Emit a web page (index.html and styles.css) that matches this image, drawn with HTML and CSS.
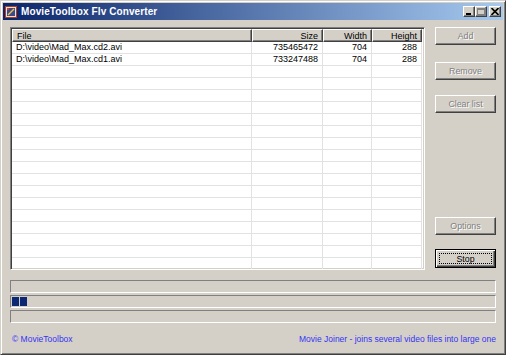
FILE: index.html
```html
<!DOCTYPE html>
<html lang="en">
<head>
  <meta charset="UTF-8">
  <title>MovieToolbox Flv Converter</title>
  <link rel="stylesheet" href="styles.css">
</head>
<body>

  <div class="window">
    <div class="titlebar">
      <svg class="app-icon" width="12" height="12" viewBox="0 0 12 12">
        <rect x="0.5" y="0.5" width="11" height="11" fill="#e8e4dc" stroke="#b83a1a"/>
        <rect x="2" y="2" width="8" height="8" fill="#3a4a8a"/>
        <path d="M3 9 L9 3" stroke="#f0c040" stroke-width="1.5"/>
        <rect x="2" y="2" width="2" height="2" fill="#d04020"/>
      </svg>
      <span class="title">MovieToolbox Flv Converter</span>
      <div class="caption-buttons">
        <span class="cap-btn">
          <svg width="8" height="7" viewBox="0 0 8 7"><rect x="1" y="5" width="5" height="2" fill="#000"/></svg>
        </span>
        <span class="cap-btn">
          <svg width="8" height="7" viewBox="0 0 8 7"><rect x="0.5" y="0.5" width="7" height="6" fill="none" stroke="#808080"/><rect x="0" y="0" width="8" height="2" fill="#808080"/></svg>
        </span>
        <span class="cap-btn close">
          <svg width="8" height="7" viewBox="0 0 8 7"><path d="M0.5 0 L7.5 7 M7.5 0 L0.5 7" stroke="#000" stroke-width="1.6"/></svg>
        </span>
      </div>
    </div>

    <div class="main">
      <div class="listview">
        <table>
          <thead>
            <tr>
              <th class="col-file">File</th>
              <th class="col-size num">Size</th>
              <th class="col-width num">Width</th>
              <th class="col-height num">Height</th>
            </tr>
          </thead>
          <tbody id="file-list"></tbody>
        </table>
      </div>

      <div class="actions">
        <button class="btn btn-add" disabled>Add</button>
        <button class="btn btn-remove" disabled>Remove</button>
        <button class="btn btn-clear" disabled>Clear list</button>
        <button class="btn btn-options" disabled>Options</button>
        <button class="btn btn-stop">Stop</button>
      </div>
    </div>

    <div class="progress first"></div>
    <div class="progress">
      <span class="block"></span>
      <span class="block"></span>
    </div>
    <div class="progress"></div>

    <div class="footer">
      <span>© MovieToolbox</span>
      <span>Movie Joiner - joins several video files into large one</span>
    </div>
  </div>

  <script>
    const files = [
      { name: "D:\\video\\Mad_Max.cd2.avi", size: 735465472, width: 704, height: 288 },
      { name: "D:\\video\\Mad_Max.cd1.avi", size: 733247488, width: 704, height: 288 }
    ];

    const body = document.getElementById("file-list");
    for (let i = 0; i < 19; i++) {
      const f = files[i];
      const tr = document.createElement("tr");
      tr.innerHTML = f
        ? `<td>${f.name}</td><td class="num">${f.size}</td><td class="num">${f.width}</td><td class="num">${f.height}</td>`
        : `<td></td><td></td><td></td><td></td>`;
      body.appendChild(tr);
    }
  </script>

</body>
</html>
```

FILE: styles.css
```css
:root {
  --face: #d4d0c8;
  --light: #ffffff;
  --shadow: #808080;
  --dark: #404040;
  --grid: #e2e2e2;
  --link: #3434f2;
}

body {
  margin: 0;
  background: var(--face);
  font-family: 'Liberation Sans', Arial, sans-serif;
}

.window {
  box-sizing: border-box;
  width: 506px;
  height: 355px;
  background: var(--face);
  border: 1px solid;
  border-color: var(--face) var(--dark) var(--dark) var(--face);
  box-shadow: inset 1px 1px var(--light), inset -1px -1px var(--shadow);
  padding: 2px;
}

.titlebar {
  height: 17px;
  display: flex;
  align-items: center;
  background: linear-gradient(to right, #0a246a, #a6caf0);
  color: #fff;
}

.app-icon {
  margin-left: 2px;
  flex: none;
}

.title {
  margin-left: 4px;
  font-weight: bold;
  font-size: 10px;
  letter-spacing: 0.1px;
}

.caption-buttons {
  margin-left: auto;
  margin-right: 2px;
  display: flex;
}

.cap-btn {
  box-sizing: border-box;
  width: 12px;
  height: 11px;
  display: flex;
  align-items: center;
  justify-content: center;
  background: var(--face);
  border: 1px solid;
  border-color: var(--light) var(--dark) var(--dark) var(--light);
  box-shadow: inset -1px -1px var(--shadow);
}

.cap-btn.close {
  margin-left: 2px;
}

.main {
  display: flex;
  margin: 7px 0 0 7px;
}

.listview {
  box-sizing: border-box;
  width: 415px;
  height: 243px;
  background: #fff;
  border: 1px solid;
  border-color: var(--shadow) var(--light) var(--light) var(--shadow);
  box-shadow: inset 1px 1px var(--dark), inset -1px -1px var(--face);
  padding: 1px;
  overflow: hidden;
}

.listview table {
  table-layout: fixed;
  border-collapse: separate;
  border-spacing: 0;
  width: 410px;
  font-size: 9px;
  color: #000;
}

.col-file { width: 240px; }
.col-size { width: 71px; }
.col-width { width: 49px; }
.col-height { width: 50px; }

.listview th {
  box-sizing: border-box;
  height: 13px;
  padding: 0 4px 0 4px;
  font-weight: normal;
  text-align: left;
  background: var(--face);
  border: 1px solid;
  border-color: var(--light) var(--dark) var(--dark) var(--light);
  box-shadow: inset -1px -1px var(--shadow);
  line-height: 10px;
}

.listview td {
  box-sizing: border-box;
  height: 12px;
  padding: 0 4px;
  border-right: 1px solid var(--grid);
  border-bottom: 1px solid var(--grid);
  line-height: 11px;
  white-space: nowrap;
  overflow: hidden;
}

.listview .num {
  text-align: right;
}

.actions {
  display: flex;
  flex-direction: column;
  margin-left: 10px;
}

.btn {
  position: relative;
  box-sizing: border-box;
  width: 61px;
  height: 18px;
  padding: 0;
  font-family: 'Liberation Sans', Arial, sans-serif;
  font-size: 8.8px;
  color: #000;
  background: var(--face);
  border: 1px solid;
  border-color: var(--light) var(--dark) var(--dark) var(--light);
  box-shadow: inset -1px -1px var(--shadow);
}

.btn:disabled {
  color: var(--shadow);
  text-shadow: 1px 1px var(--light);
}

.btn-remove { margin-top: 17px; }
.btn-clear { margin-top: 15px; }
.btn-options { margin-top: 104px; }

.btn-stop {
  margin-top: 14px;
  height: 19px;
  border-color: #000;
  box-shadow: inset 1px 1px var(--light), inset -1px -1px var(--dark), inset -2px -2px var(--shadow);
}

.btn-stop::after {
  content: "";
  position: absolute;
  inset: 3px;
  border: 1px dotted #000;
}

.progress {
  box-sizing: border-box;
  width: 486px;
  height: 13px;
  margin: 2px 0 0 7px;
  padding: 1px;
  display: flex;
  gap: 1px;
  border: 1px solid;
  border-color: var(--shadow) var(--light) var(--light) var(--shadow);
}

.progress.first {
  margin-top: 10px;
}

.block {
  width: 7px;
  height: 9px;
  background: #0c2872;
}

.footer {
  display: flex;
  justify-content: space-between;
  margin: 10px 7px 0 9px;
  font-size: 8.5px;
  color: var(--link);
  line-height: 12px;
}
```
